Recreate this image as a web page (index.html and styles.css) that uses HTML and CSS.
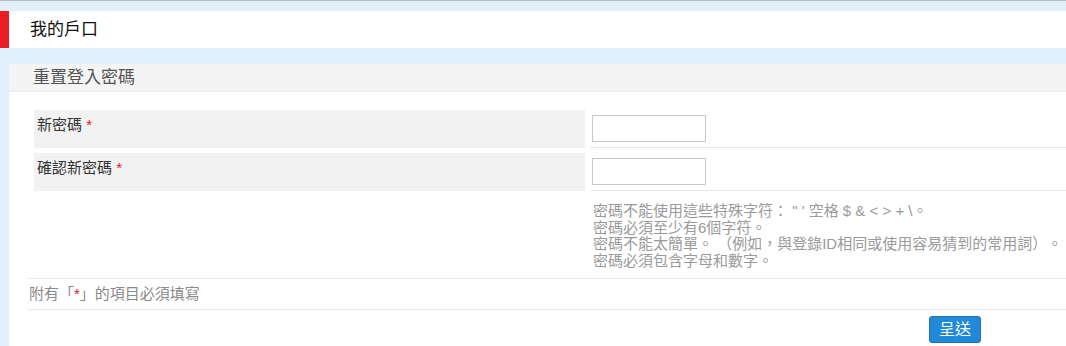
FILE: index.html
```html
<!DOCTYPE html>
<html lang="zh-Hant">
<head>
<meta charset="utf-8">
<title>我的戶口</title>
<link rel="stylesheet" href="styles.css">
</head>
<body>
<div class="page">
  <div class="topbar">我的戶口</div>
  <div class="panel">
    <div class="section-head">重置登入密碼</div>
    <div class="fields">
      <div class="label">新密碼 <span class="req">*</span></div>
      <div class="value"><input class="field" type="password"></div>
      <div class="label">確認新密碼 <span class="req">*</span></div>
      <div class="value"><input class="field" type="password"></div>
    </div>
    <div class="hints">
      <div>密碼不能使用這些特殊字符： " ' 空格 $ &amp; &lt; &gt; + \。</div>
      <div>密碼必須至少有6個字符。</div>
      <div>密碼不能太簡單。 （例如，與登錄ID相同或使用容易猜到的常用詞）。</div>
      <div>密碼必須包含字母和數字。</div>
    </div>
    <div class="note">附有「<span class="req">*</span>」的項目必須填寫</div>
    <div class="actions"><button class="submit" type="button">呈送</button></div>
  </div>
</div>
</body>
</html>
```

FILE: styles.css
```css
html, body {
  margin: 0;
  padding: 0;
}
body {
  background: #e1f0fb;
  border-top: 1px solid #b3bdc5;
  font-family: "Liberation Sans", "Noto Sans CJK TC", sans-serif;
  text-spacing-trim: space-all;
  height: 345px;
  overflow: hidden;
}
.page {
  padding-top: 10px;
}
.topbar {
  background: #ffffff;
  border-left: 9px solid #ee1c25;
  height: 37px;
  line-height: 37px;
  padding-left: 21px;
  font-size: 17px;
  color: #111;
}
.panel {
  margin-top: 16px;
  margin-left: 9px;
  background: #ffffff;
  height: 300px;
}
.section-head {
  background: #f4f4f4;
  height: 27px;
  line-height: 27px;
  border-bottom: 1px solid #ededed;
  padding-left: 24px;
  font-size: 17px;
  color: #555;
}
.fields {
  display: grid;
  grid-template-columns: 551px 1fr;
  column-gap: 5px;
  row-gap: 5px;
  margin-top: 18px;
  margin-left: 25px;
}
.label {
  background: #f2f2f2;
  height: 38px;
  box-sizing: border-box;
  padding: 5px 3px;
  line-height: 20px;
  font-size: 15px;
  color: #333;
}
.req {
  color: #e3141c;
}
.value {
  height: 38px;
  box-sizing: border-box;
  border-bottom: 1px solid #e9e9e9;
  padding: 5px 0 0 2px;
}
.field {
  display: block;
  box-sizing: border-box;
  width: 114px;
  height: 27px;
  margin: 0;
  border: 1px solid #c8c8c8;
  background: #fff;
  padding: 0 4px;
}
.hints {
  margin-left: 19px;
  padding: 12px 0 9px 565px;
  border-bottom: 1px solid #e9e9e9;
  font-size: 15px;
  line-height: 16.5px;
  color: #9a9a9a;
  white-space: nowrap;
}
.note {
  margin-left: 19px;
  padding-left: 1px;
  height: 30px;
  line-height: 30px;
  border-bottom: 1px solid #e9e9e9;
  font-size: 15px;
  color: #8a8a8a;
}
.actions {
  display: flex;
  padding: 6px 0 0 920px;
}
.submit {
  width: 52px;
  height: 27px;
  box-sizing: border-box;
  border: 1px solid #1b72b5;
  border-radius: 3px;
  background: #208ad8;
  color: #fff;
  font-family: "Liberation Sans", "Noto Sans CJK TC", sans-serif;
  font-size: 16px;
  line-height: 23px;
  padding: 0;
}
```
